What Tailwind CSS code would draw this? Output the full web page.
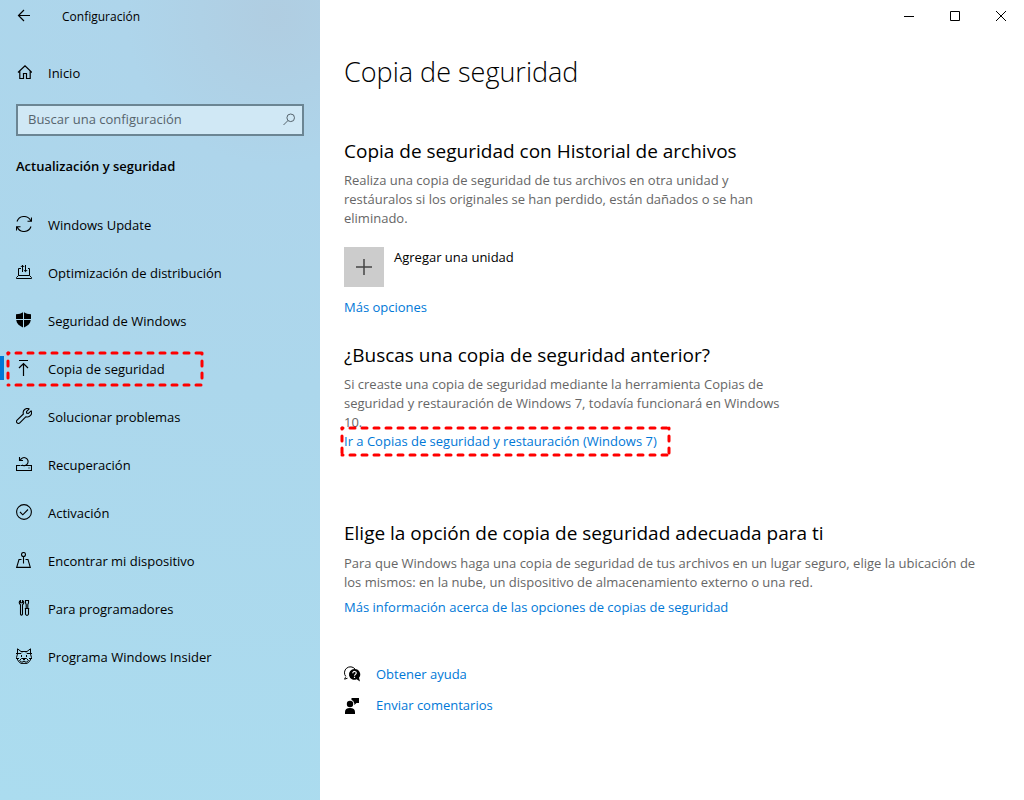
<!DOCTYPE html>
<html lang="es">
<head>
    <meta charset="UTF-8">
    <meta name="viewport" content="width=device-width, initial-scale=1.0">
    <title>Configuración</title>
    <script src="https://cdn.jsdelivr.net/npm/@tailwindcss/browser@4"></script>
</head>
<body class="flex min-h-screen bg-white font-['Open_Sans','Noto_Sans',sans-serif] text-[13px] leading-[19px] text-black">

    <!-- Barra lateral -->
    <aside class="w-80 shrink-0 bg-[radial-gradient(circle_at_86%_2%,#b0cde1_0%,#aed5eb_18%,#acd7ec_45%,#abdcef_100%)]">
        <header class="flex h-8 items-center gap-7 pl-4">
            <button type="button" aria-label="Atrás" class="flex size-4 items-center justify-center">
                <svg class="size-4" viewBox="0 0 16 16" fill="none" stroke="currentColor" stroke-width="1.2"><path d="M14 7.5H2.5M8 2L2.5 7.5L8 13"/></svg>
            </button>
            <span class="pt-[2px] pl-[2px] text-xs">Configuración</span>
        </header>

        <a href="#" class="mt-4 flex h-12 items-center gap-4 pt-[2px] pl-4">
            <svg class="size-4" viewBox="0 0 16 16" fill="none" stroke="currentColor" stroke-width="1.2"><path d="M2 7.5L9 0.8L16 7.5M3.8 6V13.5H7.5V8.5H10.5V13.5H14.2V6"/></svg>
            Inicio
        </a>

        <div class="px-4 pt-2">
            <label class="flex h-8 items-center border-2 border-[#6b8593] bg-[#d0e8f5] pr-[7px] pb-[2px] pl-[10px]">
                <input type="text" aria-label="Buscar una configuración" placeholder="Buscar una configuración" class="min-w-0 flex-1 outline-none placeholder:text-[#56646d]">
                <svg class="size-3" viewBox="0 0 12 12" fill="none" stroke="#56646d" stroke-width="1"><circle cx="7.7" cy="4.8" r="3.8"/><path d="M5 7.5L0.5 12"/></svg>
            </label>
        </div>

        <h2 class="mt-[21px] pl-4 font-semibold">Actualización y seguridad</h2>

        <nav class="mt-[25px]">
            <a href="#" class="flex h-12 items-center gap-4 pl-4">
                <svg class="mb-[2px] size-4" viewBox="0 0 16 16" fill="none" stroke="currentColor" stroke-width="1.1"><path d="M1 5.5A7.4 7.4 0 0 1 14.8 5M15.5 1.5V5.3H11.5M15 10.5A7.4 7.4 0 0 1 1.2 11M0.5 14.5V10.7H4.5"/></svg>
                Windows Update
            </a>
            <a href="#" class="flex h-12 items-center gap-4 pl-4">
                <svg class="mb-[2px] size-4" viewBox="0 0 16 16" fill="none" stroke="currentColor"><path d="M5 4.5H2.5V11.5H13.5V4.5H12M2.5 11.5L0.5 13.5V14.5H15.5V13.5L13.5 11.5M6.5 8V1M4.8 3L6.5 1.3L8.2 3M9.5 1V7.5M7.8 6L9.5 7.7L11.2 6"/></svg>
                Optimización de distribución
            </a>
            <a href="#" class="flex h-12 items-center gap-4 pl-4">
                <svg class="mb-[2px] size-4" viewBox="0 0 16 16" fill="currentColor"><path d="M7 0.2V7H0V2.2C3 2.2 5.2 1.5 7 0.2ZM8 0.2C9.8 1.5 12 2.2 15 2.2V7H8ZM0.2 8H7V15.6C3 13.7 0.7 11.5 0.2 8ZM8 8H14.8C14.3 11.5 12 13.7 8 15.6Z"/></svg>
                Seguridad de Windows
            </a>
            <a href="#" aria-current="page" class="relative flex h-12 items-center gap-4 pl-4">
                <span class="absolute top-[11px] left-0 h-6 w-1 bg-[#0078d7]"></span>
                <svg class="mb-[2px] size-4" viewBox="0 0 16 16" fill="none" stroke="currentColor" stroke-width="1.2"><path d="M3 0.5H12M7.5 16V3.5M3 8L7.5 3.5L12 8"/></svg>
                Copia de seguridad
                <svg class="absolute top-2 left-2 h-8 w-[194px] overflow-visible" stroke="#f00" stroke-width="3" stroke-linecap="round" stroke-dasharray="5 7" stroke-dashoffset="4"><line x1="0" y1="0" x2="100%" y2="0"/><line x1="0" y1="100%" x2="100%" y2="100%"/><line x1="0" y1="0" x2="0" y2="100%"/><line x1="100%" y1="0" x2="100%" y2="100%"/></svg>
            </a>
            <a href="#" class="flex h-12 items-center gap-4 pl-4">
                <svg class="mb-[2px] size-4" viewBox="0 0 16 16" fill="none" stroke="currentColor" stroke-width="1.1" stroke-linejoin="round"><path d="M13.2 0.9A4.2 4.2 0 0 0 7.4 6L1.1 12.2A1.9 1.9 0 0 0 3.8 14.9L10 8.7A4.2 4.2 0 0 0 15.1 2.8L12.4 5.4L10.6 5.3L10.5 3.6Z"/></svg>
                Solucionar problemas
            </a>
            <a href="#" class="flex h-12 items-center gap-4 pl-4">
                <svg class="mb-[2px] size-4" viewBox="0 0 16 16" fill="none" stroke="currentColor" stroke-width="1.1"><path d="M4 9.5H0.5V14.5H15.5V9.5H12M4.5 9.5H6.5M9.5 9.5H12M6 9A4 4 0 1 0 4.3 4.2M3.5 1V4.5H7M12.5 12H13.5"/></svg>
                Recuperación
            </a>
            <a href="#" class="flex h-12 items-center gap-4 pl-4">
                <svg class="mb-[2px] size-4" viewBox="0 0 16 16" fill="none" stroke="currentColor" stroke-width="1.1"><circle cx="8" cy="8" r="7.4"/><path d="M4 8L6.8 10.8L12 5.5"/></svg>
                Activación
            </a>
            <a href="#" class="flex h-12 items-center gap-4 pl-4">
                <svg class="mb-[2px] size-4" viewBox="0 0 16 16" fill="none" stroke="currentColor" stroke-width="1.1"><circle cx="7.5" cy="2.5" r="2"/><path d="M7.5 4.5V11.5M5.5 7.5H3L0.7 15.4H14.3L12 7.5H9.5"/></svg>
                Encontrar mi dispositivo
            </a>
            <a href="#" class="flex h-12 items-center gap-4 pl-4">
                <svg class="mb-[2px] size-4" viewBox="0 0 16 16" fill="none" stroke="currentColor" stroke-width="1.1"><path d="M4.5 0.5C2.8 1.3 2.8 3.8 4.5 4.8V14.2Q5.5 16 6.5 14.2V4.8C8.2 3.8 8.2 1.3 6.5 0.5V2.8H4.5ZM9.5 0.5H12.5V3L11.8 4.5V8.5H10.2V4.5L9.5 3ZM8.8 8.5H13.2M9.5 8.5V14.2Q11 16.5 12.5 14.2V8.5"/></svg>
                Para programadores
            </a>
            <a href="#" class="flex h-12 items-center gap-4 pl-4">
                <svg class="mb-[2px] size-4" viewBox="0 0 16 16" fill="none" stroke="currentColor"><path d="M1.5 6V0.8L5 3.5H11L14.5 0.8V6L15.5 9.5L13.5 13.5L11 15.4H5L2.5 13.5L0.5 9.5ZM0 5.5H5L6 4.5M16 5.5H11L10 4.5M0 10.5H3M13 10.5H16M5.5 7V9M10.5 7V9M3.5 12.5L5.5 10.5H10.5L12.5 12.5L10.5 14H9L8 12.8L7 14H5.5ZM6.5 10.5L8 12L9.5 10.5"/></svg>
                Programa Windows Insider
            </a>
        </nav>
    </aside>

    <!-- Contenido -->
    <div class="min-w-0 flex-1">
        <div class="flex h-8 justify-end">
            <button type="button" aria-label="Minimizar" class="flex w-[46px] items-center justify-center"><svg class="size-[10px]" viewBox="0 0 10 10" stroke="currentColor"><path d="M0 5.5H10"/></svg></button>
            <button type="button" aria-label="Maximizar" class="flex w-[46px] items-center justify-center"><svg class="size-[10px]" viewBox="0 0 10 10" fill="none" stroke="currentColor"><path d="M0.5 0.5H9.5V9.5H0.5Z"/></svg></button>
            <button type="button" aria-label="Cerrar" class="flex w-[46px] items-center justify-center"><svg class="size-[10px]" viewBox="0 0 10 10" stroke="currentColor"><path d="M0 0L10 10M10 0L0 10"/></svg></button>
        </div>

        <main class="pr-8 pl-6">
            <h1 class="mt-5 text-[27px] leading-10 font-light">Copia de seguridad</h1>

            <section class="mt-[43px]">
                <h2 class="text-[19px] leading-8">Copia de seguridad con Historial de archivos</h2>
                <p class="mt-1 max-w-[456px] text-[#666]">Realiza una copia de seguridad de tus archivos en otra unidad y restáuralos si los originales se han perdido, están dañados o se han eliminado.</p>
                <button type="button" class="mt-[19px] flex gap-[10px] text-left">
                    <span class="flex size-10 items-center justify-center bg-[#ccc]"><svg class="size-4" viewBox="0 0 16 16" stroke="#444" stroke-width="1.5"><path d="M0 8H16M8 0V16"/></svg></span>
                    <span class="pt-px">Agregar una unidad</span>
                </button>
                <a href="#" class="mt-[11px] inline-block text-[#0078d7]">Más opciones</a>
            </section>

            <section class="mt-[22px]">
                <h2 class="text-[19px] leading-8">¿Buscas una copia de seguridad anterior?</h2>
                <p class="mt-1 max-w-[456px] text-[#666]">Si creaste una copia de seguridad mediante la herramienta Copias de seguridad y restauración de Windows 7, todavía funcionará en Windows 10.</p>
                <a href="#" class="relative inline-block text-[#0078d7]">
                    Ir a Copias de seguridad y restauración (Windows 7)
                    <svg class="absolute -top-1 -left-[2px] h-[27px] w-[327px] overflow-visible" stroke="#f00" stroke-width="3" stroke-linecap="round" stroke-dasharray="5 7" stroke-dashoffset="4"><line x1="0" y1="0" x2="100%" y2="0"/><line x1="0" y1="100%" x2="100%" y2="100%"/><line x1="0" y1="0" x2="0" y2="100%"/><line x1="100%" y1="0" x2="100%" y2="100%"/></svg>
                </a>
            </section>

            <section class="mt-[66px]">
                <h2 class="text-[19px] leading-8">Elige la opción de copia de seguridad adecuada para ti</h2>
                <p class="mt-[5px] text-[#666]">Para que Windows haga una copia de seguridad de tus archivos en un lugar seguro, elige la ubicación de los mismos: en la nube, un dispositivo de almacenamiento externo o una red.</p>
                <a href="#" class="mt-[6px] inline-block text-[#0078d7]">Más información acerca de las opciones de copias de seguridad</a>
            </section>

            <div class="mt-12 flex flex-col items-start gap-3 pb-6">
                <a href="#" class="flex items-center gap-4 text-[#0078d7]">
                    <svg class="size-4 overflow-visible text-black" viewBox="0 0 16 16"><path d="M1.5 10.2L0.6 12.2L3.5 11.2M1.8 9.5A5.6 5.6 0 1 1 11 2" fill="none" stroke="currentColor"/><path d="M10.5 2A5.4 5.4 0 1 0 12.6 12.3L16 14.5L15 10.8A5.4 5.4 0 0 0 10.5 2Z" fill="currentColor"/><path d="M8.8 6.2C8.8 3.8 12.4 4 12.2 6.2C12.1 7.4 10.5 7.4 10.5 8.8M10.5 9.8V11" fill="none" stroke="#fff" stroke-width="1.2"/></svg>
                    Obtener ayuda
                </a>
                <a href="#" class="flex items-center gap-4 text-[#0078d7]">
                    <svg class="size-4 text-black" viewBox="0 0 16 16" fill="currentColor"><circle cx="6" cy="6" r="3.2"/><path d="M1 16V14Q1 10 6 10Q11 10 11 14V16ZM7.5 0H15V5H12.5L10.3 7V5H10Q9.8 2.5 7.5 2Z"/></svg>
                    Enviar comentarios
                </a>
            </div>
        </main>
    </div>
</body>
</html>
